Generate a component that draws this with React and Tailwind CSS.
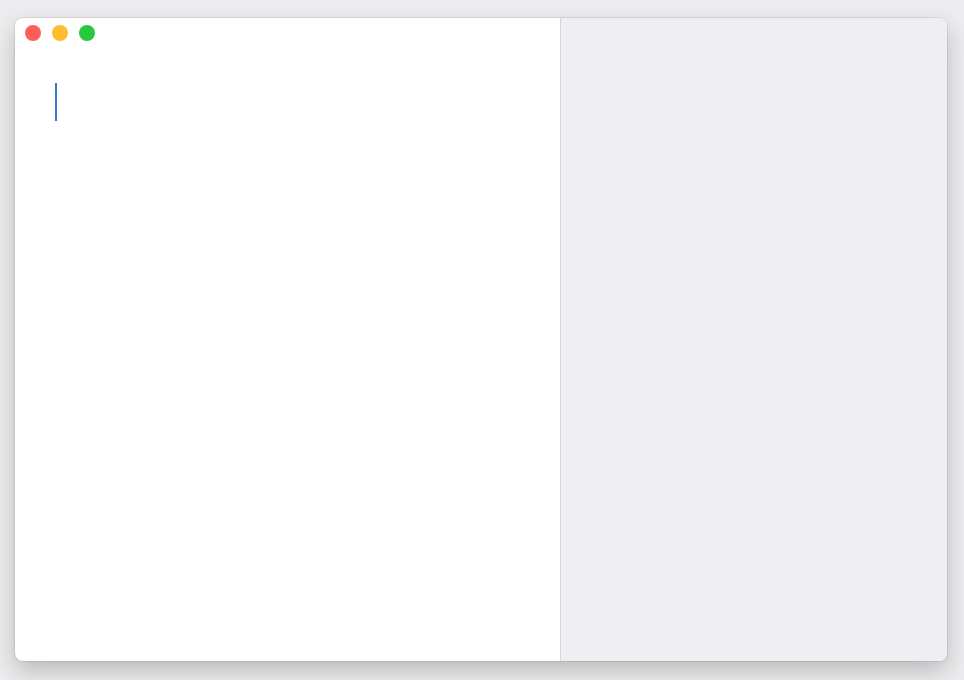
import React from "react";

function TrafficLights() {
  return (
    <div className="flex flex-row gap-[11px] pl-[10px] pt-[7px]">
      <span className="block w-4 h-4 rounded-full bg-[#fe5f57]" />
      <span className="block w-4 h-4 rounded-full bg-[#febc2e]" />
      <span className="block w-4 h-4 rounded-full bg-[#28c840]" />
    </div>
  );
}

export default function App() {
  return (
    <div className="w-[964px] h-[680px] bg-[#ededef] pt-[18px] pl-[15px] overflow-hidden">
      <div className="w-[932px] h-[643px] rounded-lg bg-white flex flex-row overflow-hidden shadow-[0_0_0_1px_rgba(0,0,0,0.08),0_10px_24px_rgba(0,0,0,0.22)]">
        <div className="w-[545px] flex flex-col">
          <TrafficLights />
          <div className="pl-[40px] pt-[42px]">
            <div className="w-[2px] h-[38px] bg-[#3a78c9]" />
          </div>
        </div>
        <div className="flex-1 border-l border-[#d6d5d9] bg-[#efeef2]" />
      </div>
    </div>
  );
}
